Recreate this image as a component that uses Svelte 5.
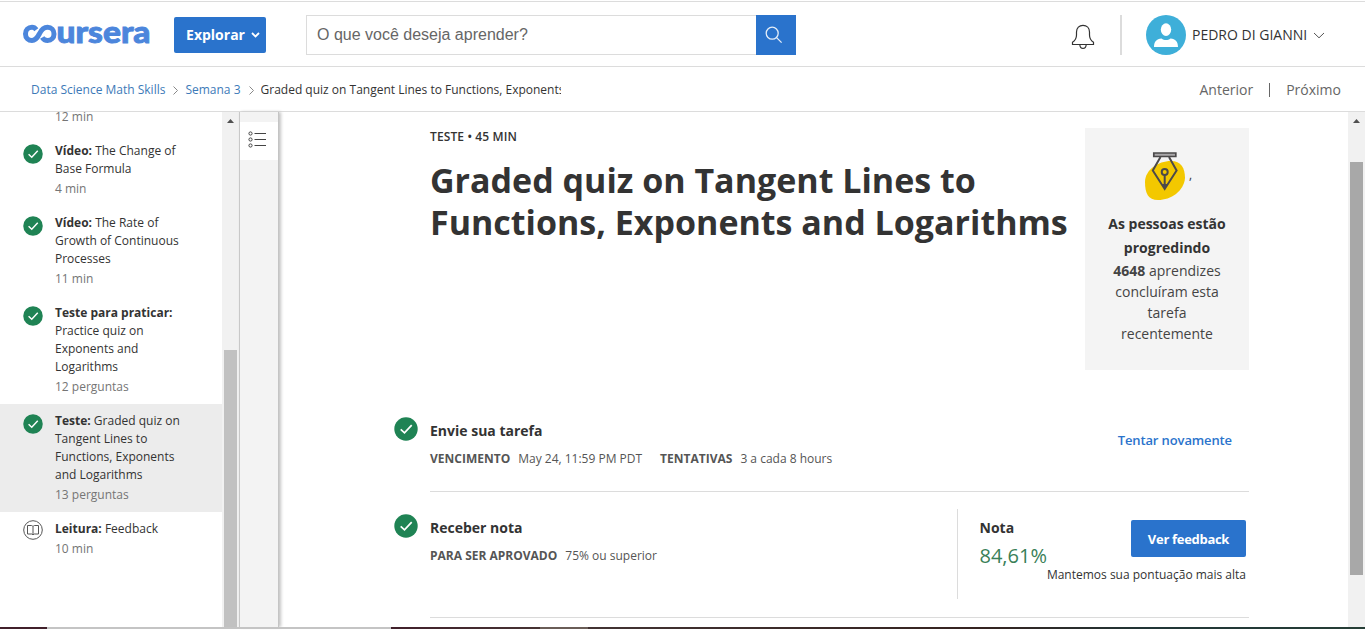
<script>
  const lessons = [
    { done: true, kind: 'Vídeo:', lines: ['The Change of', 'Base Formula'], meta: '4 min' },
    { done: true, kind: 'Vídeo:', lines: ['The Rate of', 'Growth of Continuous', 'Processes'], meta: '11 min' },
    { done: true, kind: 'Teste para praticar:', lines: ['', 'Practice quiz on', 'Exponents and', 'Logarithms'], meta: '12 perguntas' },
    { done: true, active: true, kind: 'Teste:', lines: ['Graded quiz on', 'Tangent Lines to', 'Functions, Exponents', 'and Logarithms'], meta: '13 perguntas' },
    { done: false, kind: 'Leitura:', lines: ['Feedback'], meta: '10 min' }
  ];
</script>

{#snippet check(size)}
  <svg class="check" width={size} height={size} viewBox="0 0 24 24">
    <circle cx="12" cy="12" r="11.7" fill="#1f8354" />
    <path d="M6.7 12.3l3.8 3.6 7.2-7.8" fill="none" stroke="#fff" stroke-width="1.7" />
  </svg>
{/snippet}

<div class="page">
  <header>
    <div class="logo" aria-label="coursera">
      <svg width="130" height="40" viewBox="0 0 130 40">
        <path d="M13.300 15.700C12.300 14.300 10.700 13.300 9 13.300C5.300 13.300 2.500 16 2.500 19.900S5.300 26.500 9 26.500C12.700 26.500 14.500 23.500 16.300 20C18.200 16 20.500 13.300 24.600 13.300C28.400 13.300 31 16.100 31 19.900S28.400 26.500 24.600 26.500C22.200 26.500 20.300 25.300 19.200 23.500" fill="none" stroke="#4c86dc" stroke-width="5" />
        <text x="33.500" y="28.700" textLength="94" lengthAdjust="spacingAndGlyphs">ursera</text>
      </svg>
    </div>
    <button class="explore">Explorar
      <svg width="9" height="6" viewBox="0 0 9 6"><path d="M1 1l3.5 3.4L8 1" fill="none" stroke="#fff" stroke-width="1.8" /></svg>
    </button>
    <div class="search">
      <span>O que você deseja aprender?</span>
      <i>
        <svg width="18" height="18" viewBox="0 0 18 18" fill="none" stroke="#e4edf8" stroke-width="1.3"><circle cx="7.2" cy="7.2" r="6" /><path d="M11.6 11.6l5 5" /></svg>
      </i>
    </div>
    <svg class="bell" width="24" height="27" viewBox="0 0 24 27" fill="none" stroke="#333" stroke-width="1.2">
      <path d="M1.5 20.5v-2.2c2.6-1.7 4-3.8 4-7.3V8c0-4 2.7-6.7 6.5-6.7S18.500 4 18.500 8v3c0 3.500 1.400 5.600 4 7.300v2.200zM8.800 20.700c.2 2.200 1.400 3.700 3.200 3.700s3-1.500 3.200-3.700" />
    </svg>
    <div class="user">
      <svg width="40" height="40" viewBox="0 0 40 40"><circle cx="20" cy="20" r="20" fill="#3eafd9" /><ellipse cx="20" cy="14.600" rx="5.200" ry="6.300" fill="#fff" /><path d="M8 32c0-5.500 2.500-8 7.500-8.600 2.800 2 6.200 2 9 0 5 .6 7.500 3.100 7.500 8.600z" fill="#fff" /></svg>
      <span>PEDRO DI GIANNI</span>
      <svg width="12" height="7" viewBox="0 0 12 7"><path d="M1 1l5 4.800L11 1" fill="none" stroke="#555" /></svg>
    </div>
  </header>

  <nav>
    <a>Data Science Math Skills</a>
    <svg width="5" height="9" viewBox="0 0 5 9"><path d="M.5.5l4 4-4 4" /></svg>
    <a>Semana 3</a>
    <svg width="5" height="9" viewBox="0 0 5 9"><path d="M.5.5l4 4-4 4" /></svg>
    <span class="crumb">Graded quiz on Tangent Lines to Functions, Exponents</span>
    <div class="steps"><span>Anterior</span><b></b><span>Próximo</span></div>
  </nav>

  <div class="body">
    <aside>
      <p class="cut">12 min</p>
      {#each lessons as l}
        <div class="lesson" class:active={l.active}>
          {#if l.done}
            {@render check(20)}
          {:else}
            <svg class="check book" width="20" height="20" viewBox="0 0 20 20" fill="none" stroke="#555"><circle cx="10" cy="10" r="9.300" /><path d="M10 6.500Q9.500 5.500 8.500 5.500H4.500v8.500h4.300l1.200.8 1.200-.8h4.300V5.500h-4Q10.500 5.500 10 6.500v8" /></svg>
          {/if}
          <div>
            {#each l.lines as line, i}
              <div class="line">{#if i === 0}<b>{l.kind}</b>{' '}{/if}{line}</div>
            {/each}
            <p>{l.meta}</p>
          </div>
        </div>
      {/each}
    </aside>
    <div class="bar side"><svg width="7" height="4" viewBox="0 0 7 4"><path d="M3.500 0L7 4H0z" fill="#505050" /></svg><i></i></div>
    <div class="rail">
      <div>
        <svg width="18" height="17" viewBox="0 0 18 17" fill="none" stroke="#444"><circle cx="2.500" cy="2.500" r="1.600" /><circle cx="2.500" cy="8.500" r="1.600" /><circle cx="2.500" cy="14.500" r="1.600" /><path d="M6.500 2.500H18M6.500 8.500H18M6.500 14.500H18" /></svg>
      </div>
    </div>
    <main>
      <section class="top">
        <div class="heading">
          <h4>TESTE • 45 MIN</h4>
          <h1>Graded quiz on Tangent Lines to<br />Functions, Exponents and Logarithms</h1>
        </div>
        <div class="card">
          <div class="pen">
            <svg width="42" height="50" viewBox="0 0 42 50">
              <path d="M1 31C1 19 14 10 27 10C37 10 41 17 41 27C40 40 27 49 14 49C4 49 1 42 1 31z" fill="#f3c800" />
              <g fill="none" stroke="#4b494a" stroke-width="2"><path d="M9.800 2h22v3.500h-22z" fill="#aaa8aa" stroke-width="1.700" /><path d="M16.500 6L8.800 19.500 20.700 38 32.600 19.500 25 6M20.700 24v14" /><circle cx="20.700" cy="21" r="3" /></g>
              <path d="M18 33h5.400l-2.700 5z" fill="#4b494a" />
            </svg><span>,</span>
          </div>
          <h3>As pessoas estão<br />progredindo</h3>
          <p><b>4648</b> aprendizes<br />concluíram esta<br />tarefa<br />recentemente</p>
        </div>
      </section>
      <section class="task first">
        {@render check(24)}
        <div class="info">
          <h2>Envie sua tarefa</h2>
          <p><b>VENCIMENTO</b><span>May 24, 11:59 PM PDT</span><b class="second">TENTATIVAS</b><span>3 a cada 8 hours</span></p>
        </div>
        <a class="retry">Tentar novamente</a>
      </section>
      <section class="task">
        {@render check(24)}
        <div class="info">
          <h2>Receber nota</h2>
          <p><b>PARA SER APROVADO</b><span>75% ou superior</span></p>
        </div>
        <div class="grade">
          <div class="score"><h2>Nota</h2><strong>84,61%</strong></div>
          <div class="action"><button>Ver feedback</button><small>Mantemos sua pontuação mais alta</small></div>
        </div>
      </section>
    </main>
    <div class="bar main"><svg width="7" height="4" viewBox="0 0 7 4"><path d="M3.500 0L7 4H0z" fill="#505050" /></svg><i></i></div>
  </div>
  <footer></footer>
</div>

<style>
  :global(body) { margin: 0; background: #fff; }
  * { box-sizing: border-box; }
  .page { width: 1365px; height: 632px; overflow: hidden; font-family: 'Open Sans', sans-serif; color: #333; white-space: nowrap; display: flex; flex-direction: column; }
  h1, h2, h3, h4, p { margin: 0; }
  svg { display: block; flex: none; }
  button { font-family: inherit; border: 0; border-radius: 2px; background: #2a73cc; color: #fff; font-weight: 700; padding: 0; }
  header { height: 66px; margin-top: 1px; flex: none; border-top: 1px solid #dcdcdc; border-bottom: 1px solid #dcdcdc; display: flex; align-items: center; padding-left: 23px; }
  .logo { width: 151px; }
  .logo svg { overflow: visible; }
  .logo text { font: 900 31px Lato, sans-serif; fill: #4c86dc; stroke: #4c86dc; stroke-width: .9px; }
  .explore { width: 92px; height: 36px; margin-top: 2px; font-size: 14px; display: flex; align-items: center; justify-content: center; gap: 6px; padding: 0 0 1px 6px; }
  .search { width: 490px; height: 40px; margin: 2px 0 0 40px; border: 1px solid #dcdcdc; border-right: 0; display: flex; align-items: center; justify-content: space-between; padding-left: 10px; font: 16px 'Liberation Sans', sans-serif; color: #666; }
  .search i { width: 40px; height: 40px; flex: none; background: #2a73cc; display: flex; align-items: center; justify-content: center; padding-right: 4px; }
  .bell { margin: 6px 0 0 275px; }
  .user { margin: 2px 0 0 25px; border-left: 2px solid #dcdcdc; height: 40px; padding-left: 24px; display: flex; align-items: center; font-size: 14px; }
  .user span { width: 127px; padding: 0 0 2px 6px; }
  nav { height: 45px; flex: none; border-bottom: 1px solid #dcdcdc; display: flex; align-items: center; padding: 0 24px 0 31px; font-size: 12px; }
  nav a { color: #3d7ab8; }
  nav svg { margin: 2px 7px 0 8px; stroke: #888; fill: none; }
  .crumb { width: 300px; overflow: hidden; }
  .steps { margin-left: auto; display: flex; align-items: center; font-size: 14px; color: #666; }
  .steps b { width: 1px; height: 14px; background: #666; margin: 2px 16px 0; }
  .body { display: flex; height: 515px; flex: none; }
  aside { width: 222px; overflow: hidden; font-size: 12px; line-height: 18px; }
  aside p { color: #757575; margin-top: 2px; }
  aside .cut { margin: -4px 0 8px 55px; }
  .lesson { display: flex; padding: 8px 0 8px 23px; gap: 12px; }
  .lesson .check { margin-top: 2px; }
  .lesson .book { margin-top: 0; }
  .active { background: #ececec; }
  .bar { width: 17px; background: #f1f1f1; display: flex; flex-direction: column; align-items: center; padding-top: 7px; }
  .bar i { width: 13px; background: #c1c1c1; }
  .side i { margin-top: 227px; height: 277px; }
  .main i { margin-top: 39px; height: 413px; background: #a8a8a8; }
  .rail { width: 40px; background: #f3f3f3; border-left: 1px solid #c8c8c8; border-right: 1px solid #c4c4c4; box-shadow: 2px 0 3px #c4c4c4; padding-top: 10px; }
  .rail div { height: 38px; background: #fff; display: flex; align-items: center; justify-content: center; padding: 0 4px 4px 0; }
  main { width: 1069px; padding: 16px 99px 0 115px; overflow: hidden; }
  .top { display: flex; justify-content: space-between; margin-left: 36px; height: 242px; }
  h4 { font-size: 12px; font-weight: 600; line-height: 18px; letter-spacing: .12px; }
  h1 { font-size: 34px; line-height: 42px; margin-top: 13px; font-weight: 700; }
  .card { width: 164px; flex: none; background: #f4f4f4; text-align: center; padding-top: 23px; }
  .pen { display: flex; margin-left: 59px; align-items: center; font-size: 12px; gap: 3px; }
  .pen span { margin-top: -3px; }
  h3 { font-size: 14px; line-height: 24px; font-weight: 700; margin-top: 11px; }
  .card p { font-size: 14px; line-height: 21px; color: #444; }
  .task { display: flex; position: relative; height: 126px; padding-top: 22px; }
  .task.first { margin-top: 47px; height: 75px; padding-top: 0; }
  .task::after { content: ''; position: absolute; left: 36px; right: 0; bottom: 0; border-bottom: 1px solid #dcdcdc; }
  .info { margin-left: 12px; padding-top: 3px; }
  h2 { font-size: 14px; line-height: 22px; font-weight: 700; }
  .info p { font-size: 12px; line-height: 18px; color: #555; margin-top: 8px; }
  .info span { margin-left: 8px; }
  .second { margin-left: 18px; }
  .retry { margin: 13px 17px 0 auto; font-size: 13px; line-height: 20px; font-weight: 600; letter-spacing: -.12px; color: #2a73cc; }
  .grade { margin: -5px 0 0 auto; width: 292px; height: 90px; border-left: 1px solid #dcdcdc; display: flex; padding: 8px 3px 0 21.5px; }
  .score { width: 67px; }
  .score strong { font-size: 20px; font-weight: 400; line-height: 28px; color: #398058; margin-top: 3px; display: block; }
  .action { display: flex; flex-direction: column; align-items: flex-end; padding-top: 3px; margin-left: auto; }
  .action button { width: 115px; height: 37px; font-size: 13px; letter-spacing: -.3px; }
  .action small { font-size: 12px; line-height: 18px; margin-top: 9px; }
  footer { height: 2px; flex: none; background: linear-gradient(90deg, #41202b 0 47px, #c4c4c4 47px 391px, #41202b 391px, #463333 540px, #6a5d57 540px 588px, #423333 588px, #352320 980px, #203536 1150px, #263e36); }
</style>
